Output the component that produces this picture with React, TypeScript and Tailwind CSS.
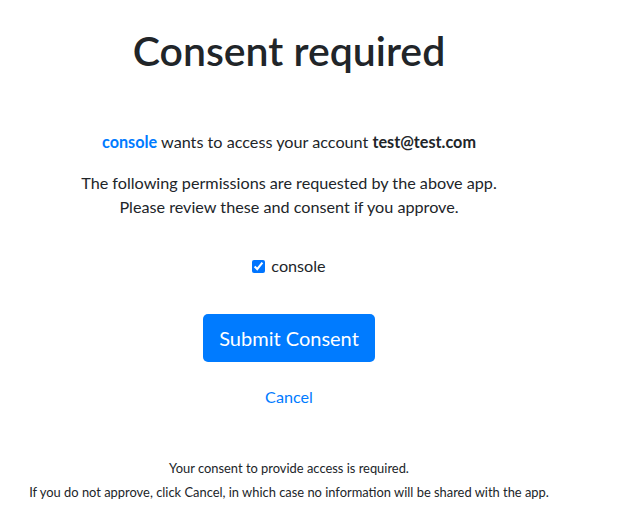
export default function App() {
	return (
		<div
			className="min-h-screen w-full bg-white text-[#212529]"
			style={{ fontFamily: '"Segoe UI", Lato, "Open Sans", sans-serif' }}
		>
			<div className="flex w-[578px] flex-col items-center pt-[27px] text-center">
				<h1 className="text-[41px] leading-[48px] font-semibold">Consent required</h1>

				<p className="mt-[55px] text-[16.2px] leading-6">
					<a href="#" className="font-bold text-[#007bff]">
						console
					</a>{" "}
					wants to access your account <strong>test@test.com</strong>
				</p>

				<p className="mt-[17px] text-[16.2px] leading-6">
					The following permissions are requested by the above app.
					<br />
					Please review these and consent if you approve.
				</p>

				<label className="mt-[35px] flex items-center gap-[6px] text-[16.2px] leading-6">
					<input type="checkbox" defaultChecked className="h-[13px] w-[13px] accent-[#0075ff]" />
					console
				</label>

				<button
					type="button"
					className="mt-[36px] h-[48px] rounded-[5px] bg-[#007bff] px-4 text-[20px] leading-[30px] text-white"
				>
					Submit Consent
				</button>

				<a href="#" className="mt-[23px] text-[16.2px] leading-6 text-[#007bff]">
					Cancel
				</a>

				<div className="mt-[47px] text-[12.9px] leading-6">
					<p>Your consent to provide access is required.</p>
					<p>If you do not approve, click Cancel, in which case no information will be shared with the app.</p>
				</div>
			</div>
		</div>
	);
}
